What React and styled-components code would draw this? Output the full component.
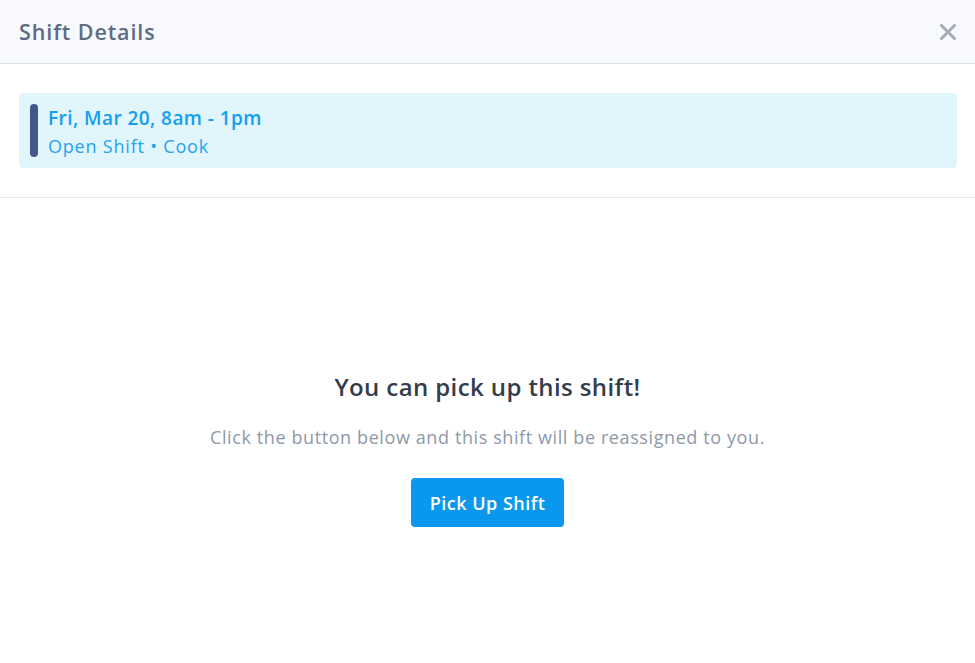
import React from 'react';
import styled, { createGlobalStyle } from 'styled-components';

const Global = createGlobalStyle`
  html, body { margin: 0; padding: 0; background: #fff; }
  body { font-family: "Open Sans", Lato, sans-serif; -webkit-font-smoothing: antialiased; }
`

const Modal = styled.div`
  width: 975px;
  height: 663px;
  display: flex;
  flex-direction: column;
  background: #fff;
`

const Header = styled.div`
  height: 64px;
  box-sizing: border-box;
  display: flex;
  align-items: center;
  justify-content: space-between;
  padding: 0 19px 0 19px;
  background: #f7f9fc;
  border-bottom: 1px solid #dfe3ea;
`

const Title = styled.h1`
  margin: 0;
  font-size: 21.5px;
  font-weight: 600;
  letter-spacing: 0.9px;
  color: #5e6d83;
`

const Close = styled.button`
  border: none;
  background: transparent;
  padding: 0;
  width: 16px;
  height: 16px;
  cursor: pointer;
  display: flex;
`

const Summary = styled.div`
  padding: 29px 18px 29px 19px;
  border-bottom: 1px solid #e4e8ee;
`

const Card = styled.div`
  display: flex;
  align-items: center;
  gap: 10px;
  height: 75px;
  box-sizing: border-box;
  padding: 0 11px;
  background: #e1f5fd;
  border-radius: 4px;
`

const Bar = styled.div`
  width: 8px;
  height: 53px;
  border-radius: 4px;
  background: ${(p) => p.color};
`

const CardText = styled.div`
  display: flex;
  flex-direction: column;
  gap: 2px;
  padding-top: 3px;
  line-height: 26px;
`

const When = styled.div`
  font-size: 19px;
  font-weight: 600;
  letter-spacing: 0.45px;
  color: #139eef;
`

const Role = styled.div`
  font-size: 18px;
  letter-spacing: 0.8px;
  color: #25a4ef;
`

const Body = styled.div`
  flex: 1;
  display: flex;
  flex-direction: column;
  align-items: center;
  padding-top: 174px;
`

const Heading = styled.h2`
  margin: 0;
  font-size: 24px;
  line-height: 30px;
  font-weight: 600;
  letter-spacing: 0.4px;
  color: #343d4b;
`

const Hint = styled.p`
  margin: 23px 0 0;
  font-size: 18px;
  line-height: 24px;
  letter-spacing: 0.6px;
  color: #8d99aa;
`

const Action = styled.button`
  margin-top: 29px;
  width: 153px;
  height: 49px;
  border: none;
  border-radius: 4px;
  background: #0a98ee;
  color: #fff;
  font-family: inherit;
  font-size: 18px;
  font-weight: 600;
  letter-spacing: 0.5px;
  cursor: pointer;
`

export default function App() {
  return (
    <Modal>
      <Global />
      <Header>
        <Title>Shift Details</Title>
        <Close aria-label="Close">
          <svg width="16" height="16" viewBox="0 0 16 16">
            <path d="M1.5 1.5L14.5 14.5M14.5 1.5L1.5 14.5" stroke="#a3abb8" strokeWidth="3" strokeLinecap="round" />
          </svg>
        </Close>
      </Header>
      <Summary>
        <Card>
          <Bar color="#44578a" />
          <CardText>
            <When>Fri, Mar 20, 8am - 1pm</When>
            <Role>Open Shift • Cook</Role>
          </CardText>
        </Card>
      </Summary>
      <Body>
        <Heading>You can pick up this shift!</Heading>
        <Hint>Click the button below and this shift will be reassigned to you.</Hint>
        <Action>Pick Up Shift</Action>
      </Body>
    </Modal>
  );
}
